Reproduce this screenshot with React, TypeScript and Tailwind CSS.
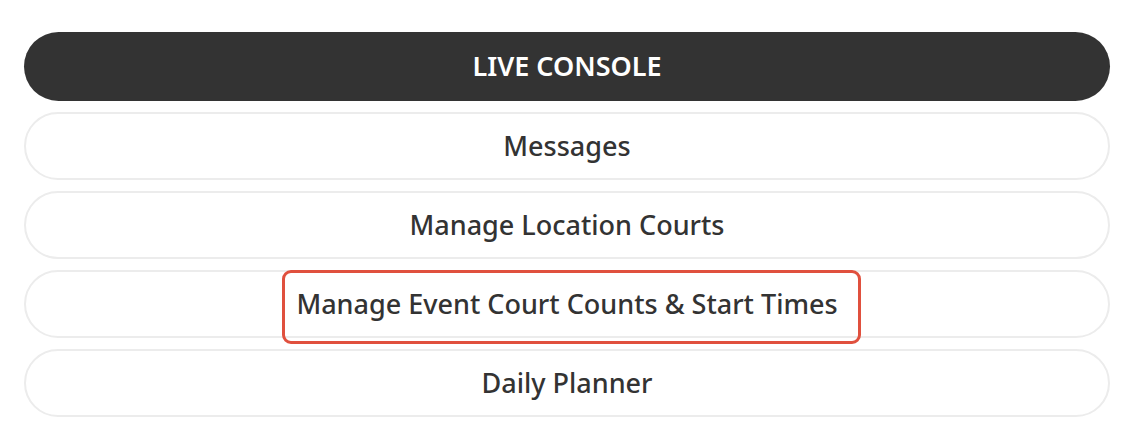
import React from "react";

export default function App() {
  const items = [
    "Messages",
    "Manage Location Courts",
    "Manage Event Court Counts & Start Times",
    "Daily Planner",
  ];

  return (
    <div
      className="w-[1141px] h-[426px] bg-white pt-[32px] pl-[24px] pr-[31px]"
      style={{ fontFamily: '"Noto Sans", "Open Sans", sans-serif' }}
    >
      <div className="flex flex-col gap-[11px]">
        {/* Active */}
        <div className="h-[69px] rounded-full bg-[#333333] flex items-center justify-center text-white text-[27px] font-semibold">
          LIVE CONSOLE
        </div>

        {items.map((item, index) => (
          <div
            key={index}
            className="h-[68px] rounded-full border-2 border-[#ececec] bg-white flex items-center justify-center text-[#333333] text-[27px] font-medium"
          >
            <span className="relative leading-[36px]">
              {item}
              {/* highlight box */}
              {index === 2 && (
                <span className="absolute -left-[14px] -right-[23px] -top-[16px] -bottom-[22px] rounded-[9px] border-[3px] border-[#e0503e]"></span>
              )}
            </span>
          </div>
        ))}
      </div>
    </div>
  );
}
